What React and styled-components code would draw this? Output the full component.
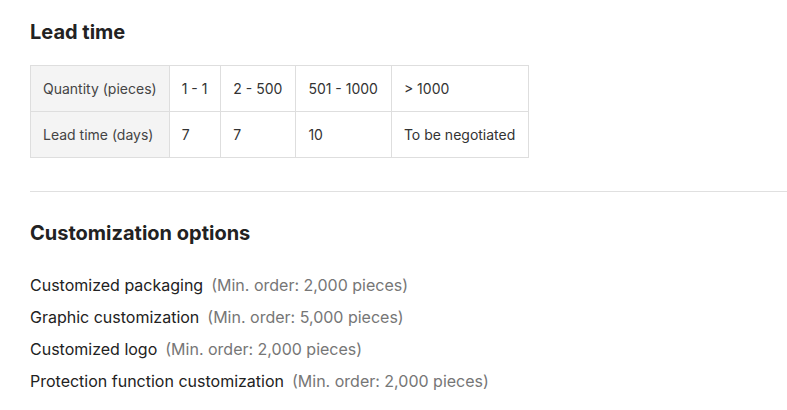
import styled, { createGlobalStyle } from "styled-components";

const GlobalStyle = createGlobalStyle`
    body {
        margin: 0;
        background: #fff;
        font-family: Inter, "Noto Sans", Arial, sans-serif;
        color: #222;
    }
`;

const quantities = ["1 - 1", "2 - 500", "501 - 1000", "> 1000"];
const days = ["7", "7", "10", "To be negotiated"];

const options = [
    { name: "Customized packaging", min: "2,000" },
    { name: "Graphic customization", min: "5,000" },
    { name: "Customized logo", min: "2,000" },
    { name: "Protection function customization", min: "2,000" },
];

export default function App() {
    return (
        <>
            <GlobalStyle />
            <Page>
                <Section>
                    <Title>Lead time</Title>
                    <LeadTable>
                        <tbody>
                            <tr>
                                <HeadCell>Quantity (pieces)</HeadCell>
                                {quantities.map((q) => <Cell key={q}>{q}</Cell>)}
                            </tr>
                            <tr>
                                <HeadCell>Lead time (days)</HeadCell>
                                {days.map((d, i) => <Cell key={i}>{d}</Cell>)}
                            </tr>
                        </tbody>
                    </LeadTable>
                </Section>

                <Divider />

                <Section>
                    <Title>Customization options</Title>
                    <OptionList>
                        {options.map((o) => (
                            <OptionRow key={o.name}>
                                <OptionName>{o.name}</OptionName>
                                <OptionMin>(Min. order: {o.min} pieces)</OptionMin>
                            </OptionRow>
                        ))}
                    </OptionList>
                </Section>
            </Page>
        </>
    );
}

const Page = styled.div`
    padding: 18px 0 0 30px;
    display: flex;
    flex-direction: column;
`;

const Section = styled.section`
    display: flex;
    flex-direction: column;
    align-items: flex-start;
`;

const Title = styled.h2`
    margin: 0 0 19px;
    font-size: 20px;
    line-height: 28px;
    font-weight: 700;
    color: #222;
`;

const LeadTable = styled.table`
    border-collapse: collapse;
    font-size: 14px;
    line-height: 21px;
    color: #333;
`;

const Cell = styled.td`
    border: 1px solid #dedede;
    padding: 12px 13px 12px 12px;
    text-align: left;
    white-space: nowrap;
`;

const HeadCell = styled(Cell)`
    padding: 12px;
    background: #f4f4f4;
    color: #444;
`;

const Divider = styled.hr`
    margin: 33px 0 27px;
    border: 0;
    border-top: 1px solid #e0e0e0;
    width: 100%;
`;

const OptionList = styled.ul`
    list-style: none;
    margin: 3px 0 0;
    padding: 0;
    display: flex;
    flex-direction: column;
`;

const OptionRow = styled.li`
    display: flex;
    gap: 8px;
    font-size: 16px;
    line-height: 32px;
`;

const OptionName = styled.span`
    color: #222;
`;

const OptionMin = styled.span`
    color: #767676;
`;
